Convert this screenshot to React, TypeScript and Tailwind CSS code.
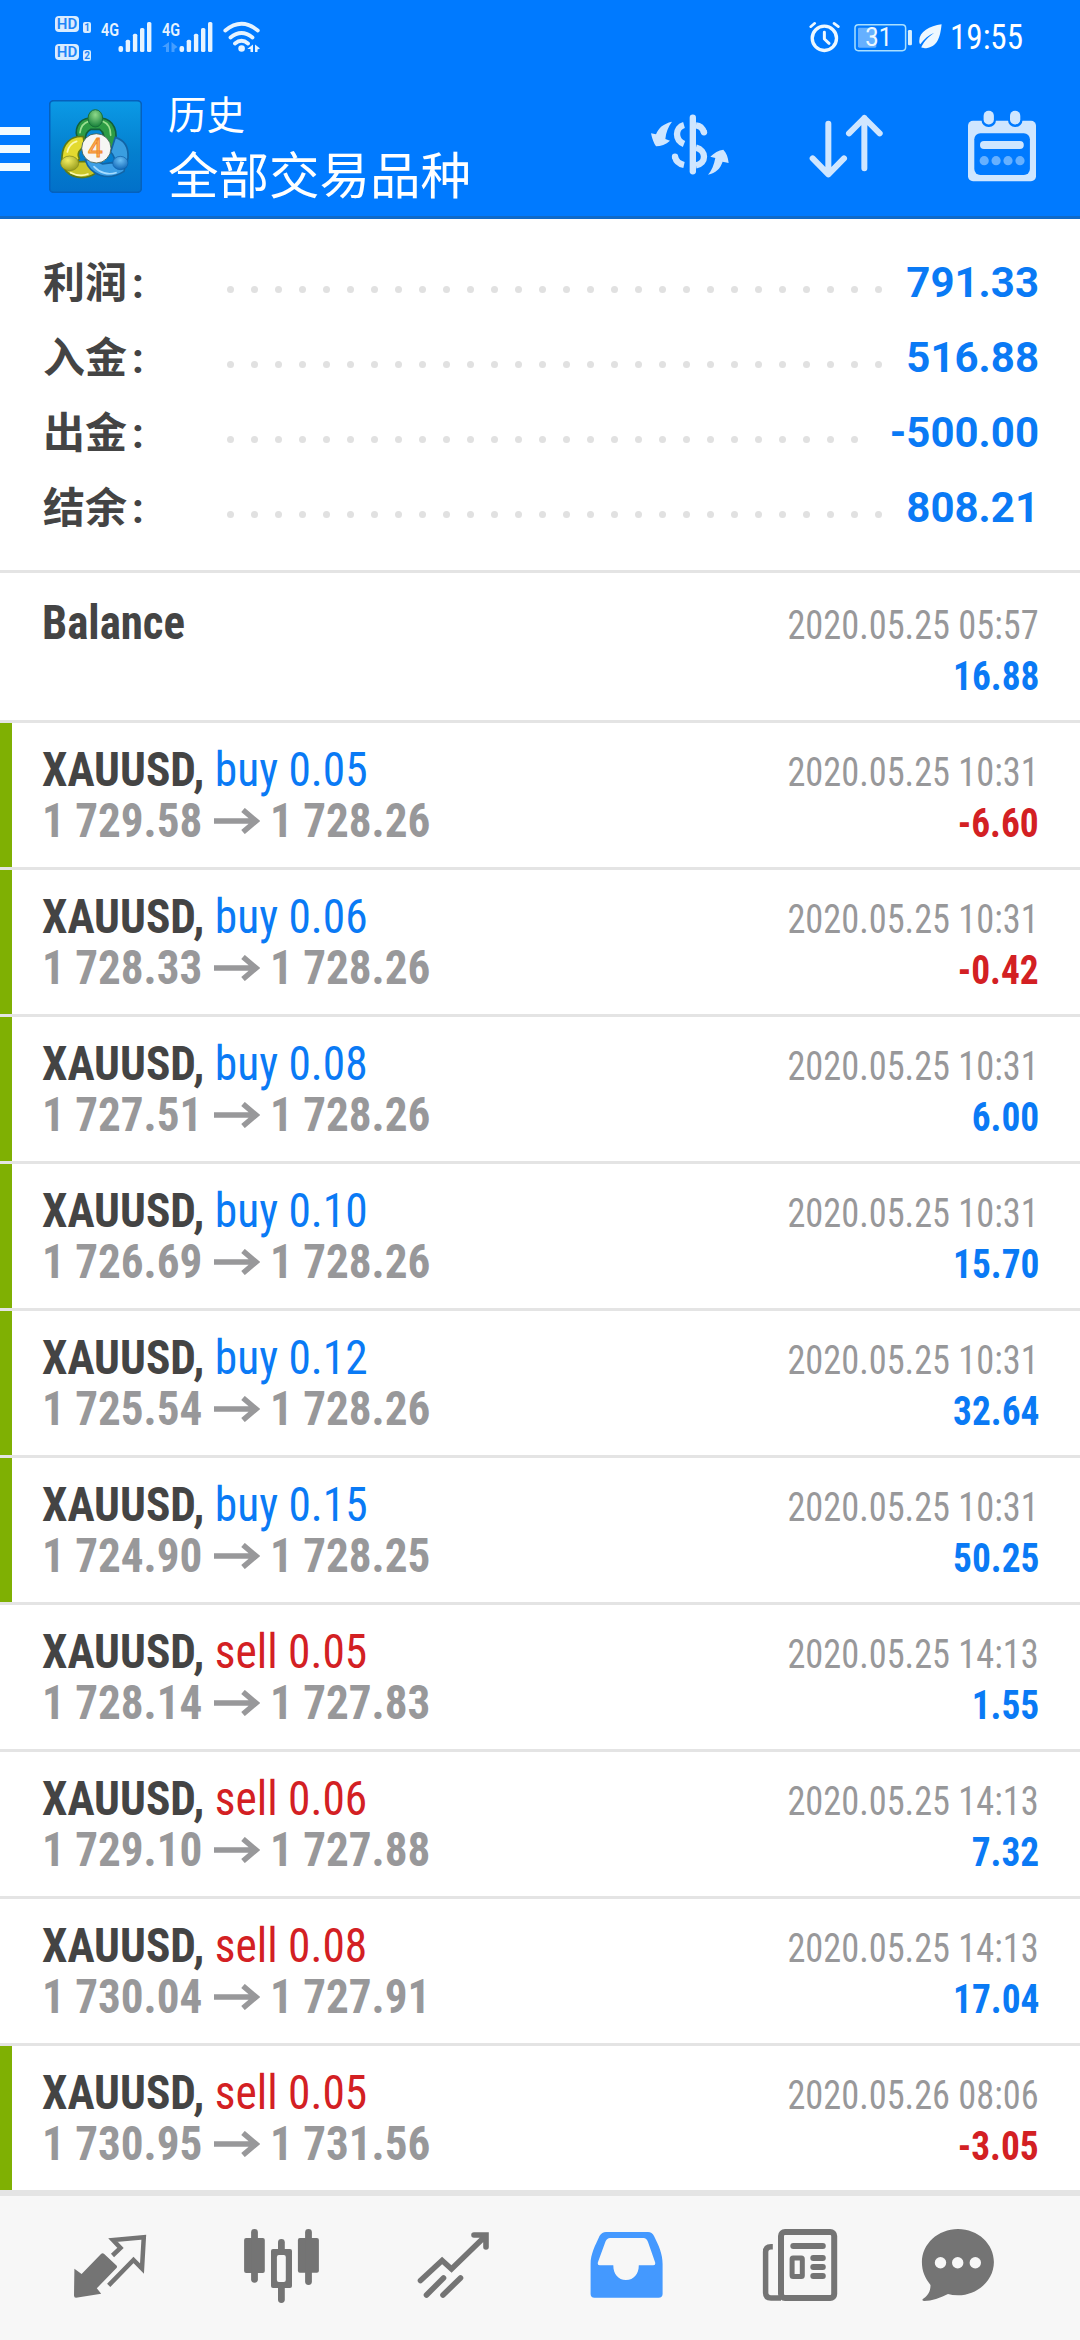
interface Deal {
  symbol: string;
  side?: "buy" | "sell";
  volume?: string;
  open?: string;
  close?: string;
  time: string;
  profit: string;
  marked?: boolean;
}

const summary = [
  { label: "利润", value: "791.33", dots: 28 },
  { label: "入金", value: "516.88", dots: 28 },
  { label: "出金", value: "-500.00", dots: 27 },
  { label: "结余", value: "808.21", dots: 28 },
];

const deals: Deal[] = [
  { symbol: "XAUUSD", side: "buy", volume: "0.05", open: "1 729.58", close: "1 728.26", time: "2020.05.25 10:31", profit: "-6.60", marked: true },
  { symbol: "XAUUSD", side: "buy", volume: "0.06", open: "1 728.33", close: "1 728.26", time: "2020.05.25 10:31", profit: "-0.42", marked: true },
  { symbol: "XAUUSD", side: "buy", volume: "0.08", open: "1 727.51", close: "1 728.26", time: "2020.05.25 10:31", profit: "6.00", marked: true },
  { symbol: "XAUUSD", side: "buy", volume: "0.10", open: "1 726.69", close: "1 728.26", time: "2020.05.25 10:31", profit: "15.70", marked: true },
  { symbol: "XAUUSD", side: "buy", volume: "0.12", open: "1 725.54", close: "1 728.26", time: "2020.05.25 10:31", profit: "32.64", marked: true },
  { symbol: "XAUUSD", side: "buy", volume: "0.15", open: "1 724.90", close: "1 728.25", time: "2020.05.25 10:31", profit: "50.25", marked: true },
  { symbol: "XAUUSD", side: "sell", volume: "0.05", open: "1 728.14", close: "1 727.83", time: "2020.05.25 14:13", profit: "1.55" },
  { symbol: "XAUUSD", side: "sell", volume: "0.06", open: "1 729.10", close: "1 727.88", time: "2020.05.25 14:13", profit: "7.32" },
  { symbol: "XAUUSD", side: "sell", volume: "0.08", open: "1 730.04", close: "1 727.91", time: "2020.05.25 14:13", profit: "17.04" },
  { symbol: "XAUUSD", side: "sell", volume: "0.05", open: "1 730.95", close: "1 731.56", time: "2020.05.26 08:06", profit: "-3.05", marked: true },
];

function HdBadge({ sim }: { sim: string }) {
  return (
    <div className="flex items-end gap-[4px]">
      <span className="flex h-[16px] w-[24px] items-center justify-center rounded-[4px] bg-[#d9ecff] text-[15px] leading-none font-semibold text-[#1f86f7]">
        HD
      </span>
      <span className="-mb-px flex h-[11px] w-[8px] items-center justify-center rounded-[2px] bg-[#d9ecff] text-[10px] leading-none font-bold text-[#1f86f7]">
        {sim}
      </span>
    </div>
  );
}

function Signal({ data }: { data?: boolean }) {
  return (
    <svg viewBox="101 20 52 34" className="h-[34px] w-[52px]" fill="#e6f3ff">
      <text x="101" y="35.6" fontSize="18.5" fontWeight="600" textLength="18" lengthAdjust="spacingAndGlyphs">
        4G
      </text>
      <rect x="118.5" y="46" width="4.6" height="6" rx="2" />
      <rect x="125.7" y="39.7" width="4.4" height="12.3" rx="1.6" />
      <rect x="132.9" y="33.7" width="4.4" height="18.3" rx="1.6" />
      <rect x="140" y="28" width="4.4" height="24" rx="1.6" />
      <rect x="147" y="22" width="4.4" height="30" rx="1.6" />
      {data && <path d="M108 42v10h-3v-5h-4zM110.500 42v10h3v-3l3-2z" opacity="0.3" />}
    </svg>
  );
}

function StatusBar() {
  return (
    <div className="flex h-[76px] items-start pr-[55px] pl-[55px] text-white">
      <div className="mt-[16px] flex flex-col gap-[12px]">
        <HdBadge sim="1" />
        <HdBadge sim="2" />
      </div>
      <div className="mt-[20px] ml-[10px] flex gap-[9px]">
        <Signal />
        <Signal data />
        <svg viewBox="221 20 38 34" className="h-[34px] w-[38px]" fill="none" stroke="#e6f3ff" strokeWidth="3.800" strokeLinecap="round">
          <path d="M223.300 30.500Q239.500 17 255.800 30.500M228.500 37.500Q239.500 28.500 250.500 37.500M233 43.500Q239.500 38 246 43.500" />
          <circle cx="239.600" cy="48.500" r="3.300" fill="#e6f3ff" stroke="none" />
          <path d="M251 44.500v7.500h-2.500v-3h-3.200zM253 44.500l5 4-2.500 1v2.500H253z" fill="#e6f3ff" stroke="none" />
        </svg>
      </div>
      <div className="ml-auto flex">
        <svg viewBox="26 30 400 100" className="mt-[20px] h-[33.3px] w-[133.3px]" fill="none" stroke="#eef8ff">
          <circle cx="72" cy="85" r="36.500" strokeWidth="10" />
          <path d="M72 67v20l14 13" strokeWidth="9" strokeLinecap="round" strokeLinejoin="round" />
          <path d="M31 50l12-10M101 40l13 10" strokeWidth="8" strokeLinecap="round" />
          <rect x="164" y="44" width="152" height="78" rx="10" stroke="#a9e0ff" strokeWidth="4.500" />
          <rect x="173" y="53" width="55" height="60" rx="4" fill="#66b0ff" stroke="none" />
          <rect x="323" y="60" width="12" height="46" rx="4" fill="#d9f0ff" stroke="none" />
          <text x="195" y="108" fontSize="76" fill="#eef8ff" stroke="none" textLength="80" lengthAdjust="spacingAndGlyphs">
            31
          </text>
          <path d="M424 43c-36 5-67 22-67 50 0 5 1 8 3 10 12-18 26-28 42-35-16 11-30 24-39 44 4 3 12 3 18 2 34-5 40-40 43-71z" fill="#eef8ff" stroke="none" />
        </svg>
        <span className="mt-[17px] ml-[8px] w-[75px] origin-left scale-x-[0.945] text-[35px] leading-[42px] whitespace-nowrap [font-family:'Roboto_Condensed',Roboto,sans-serif]">
          19:55
        </span>
      </div>
    </div>
  );
}

function Logo() {
  return (
    <svg viewBox="27 28 279 279" className="h-[93px] w-[93px]">
      <defs>
        <linearGradient id="tile" x1="0" y1="0" x2="0" y2="1">
          <stop offset="0" stopColor="#0b9ae6" />
          <stop offset="0.55" stopColor="#0480cf" />
          <stop offset="1" stopColor="#0270c9" />
        </linearGradient>
        <radialGradient id="green" cx="0.5" cy="0.3" r="0.7">
          <stop offset="0" stopColor="#8fd98a" />
          <stop offset="1" stopColor="#16803a" />
        </radialGradient>
        <radialGradient id="yellow" cx="0.4" cy="0.3" r="0.75">
          <stop offset="0" stopColor="#f3ee62" />
          <stop offset="1" stopColor="#94991a" />
        </radialGradient>
        <radialGradient id="blue" cx="0.5" cy="0.3" r="0.75">
          <stop offset="0" stopColor="#6cc0f5" />
          <stop offset="1" stopColor="#0b62b4" />
        </radialGradient>
      </defs>
      <rect x="29" y="30" width="275" height="275" rx="12" fill="url(#tile)" stroke="#0561bd" strokeWidth="5" />
      <path d="M116 148C100 122 112 84 150 82h34c38 4 54 44 37 80l-12 22-22-22c8-22 4-38-8-46h-26c-12 6-18 18-17 32z" fill="#2d9c45" stroke="#12603a" strokeWidth="5" />
      <path d="M120 126c2-18 12-30 26-34M188 92c16 6 24 22 24 42" fill="none" stroke="#9be08f" strokeWidth="5" strokeLinecap="round" />
      <path d="M130 138c-38-4-62 22-64 60v24l30 10 22-28c-8-14 0-30 16-36z" fill="#e3da2f" stroke="#5d7a17" strokeWidth="5" />
      <path d="M72 232c16 30 62 38 94 16l-28-36-32 2z" fill="#c9c62a" stroke="#5d7a17" strokeWidth="5" />
      <path d="M226 140c28 8 40 32 38 62l-6 26-34-8c2-18-2-26-12-36z" fill="#3a9ee0" stroke="#1264a5" strokeWidth="5" />
      <path d="M136 208c14 44 66 66 116 34l4-20-40-6-28 4-30-14z" fill="#3d9fe6" stroke="#1264a5" strokeWidth="5" />
      <path d="M162 228c16 18 42 26 66 18" fill="none" stroke="#a5dcff" strokeWidth="5" strokeLinecap="round" />
      <path d="M82 184c4-18 14-28 28-32M92 246c16 8 36 10 52 4" fill="none" stroke="#fbf9b0" strokeWidth="5" strokeLinecap="round" />
      <ellipse cx="166" cy="83" rx="22" ry="26" fill="url(#green)" stroke="#17703a" strokeWidth="3" />
      <ellipse cx="89" cy="218" rx="27" ry="22" fill="url(#yellow)" stroke="#7c8418" strokeWidth="2" />
      <ellipse cx="241" cy="217" rx="23" ry="20" fill="url(#blue)" stroke="#0d5fa9" strokeWidth="2" />
      <circle cx="169" cy="173" r="44" fill="#f6f6f4" stroke="#3b5a4a" strokeWidth="2.500" />
      <text x="166" y="200" fontSize="78" fontWeight="400" textAnchor="middle" fill="#ffb45e" stroke="#ee8a2d" strokeWidth="3">
        4
      </text>
    </svg>
  );
}

function Header() {
  return (
    <header className="h-[219px] border-b-[3px] border-[#0f6ac9] bg-[#007aff]">
      <StatusBar />
      <div className="flex h-[140px] items-start">
        <div className="mt-[51px] flex w-[30px] flex-col gap-[10px]">
          <div className="h-[8px] bg-[#f2fbff]" />
          <div className="h-[8px] bg-[#f2fbff]" />
          <div className="h-[8px] bg-[#f2fbff]" />
        </div>
        <div className="mt-[24px] ml-[19px]">
          <Logo />
        </div>
        <div className="mt-[13px] ml-[26px] text-white">
          <p className="text-[38.5px] leading-[54px]">历史</p>
          <p className="mt-px text-[50.5px] leading-[66px]">全部交易品种</p>
        </div>
        <svg viewBox="30 40 240 190" className="mt-[37.300px] ml-[179px] h-[63.300px] w-[80px]" fill="none" stroke="#cfe6ff" strokeWidth="19">
          <path d="M158.500 54V215" strokeLinecap="round" />
          <path d="M132 76C104 84 104 122 132 133M168 77C180 78 188 86 192 98M168 144C200 152 200 192 168 197M105 172C108 184 118 193 132 196" />
          <circle cx="192" cy="98" r="9.500" fill="#cfe6ff" stroke="none" />
          <circle cx="105" cy="171" r="9.500" fill="#cfe6ff" stroke="none" />
          <path
            d="M96 66C70 72 56 84 48 104L33 101C36 118 42 132 48 140C62 140 78 134 90 123L76 118C78 98 84 82 96 66ZM204 225C228 220 240 208 248 186L266 190C264 172 260 160 250 150C236 152 222 160 211 171L226 175C222 195 216 212 204 225Z"
            fill="#cfe6ff"
            stroke="none"
          />
        </svg>
        <svg viewBox="500 40 236 200" className="mt-[37.300px] ml-[76.700px] h-[66.700px] w-[78.700px]" fill="none" stroke="#cfe6ff" strokeWidth="18" strokeLinecap="round" strokeLinejoin="round">
          <path d="M564 72V224M517 176L564 224L611 176M672 206V55M626 101L672 55L718 101" />
        </svg>
        <svg viewBox="967 109 70 74" className="mt-[33px] ml-[81.600px] h-[74px] w-[70px]">
          <rect x="968" y="120.700" width="68" height="60.500" rx="5" fill="#cfe6ff" />
          <rect x="974.300" y="133.300" width="55.600" height="41.700" rx="6" fill="#007aff" />
          <rect x="981.500" y="108.500" width="14.500" height="18.500" rx="7" fill="#007aff" />
          <rect x="1008" y="108.500" width="14.500" height="18.500" rx="7" fill="#007aff" />
          <rect x="983.600" y="110.700" width="10.300" height="13.700" rx="5" fill="#cfe6ff" />
          <rect x="1010" y="110.700" width="10.300" height="13.700" rx="5" fill="#cfe6ff" />
          <rect x="980" y="141" width="43.800" height="8" rx="4" fill="#cfe6ff" />
          {[984.2, 996.1, 1008, 1020].map((x) => (
            <circle key={x} cx={x} cy="160.700" r="4.600" fill="#66b0ff" />
          ))}
        </svg>
      </div>
    </header>
  );
}

function Summary() {
  return (
    <section className="h-[354px] border-b-[3px] border-[#e4e4e4] pt-[26px] pr-[41px] pl-[43px] text-[42px] font-bold">
      {summary.map((row) => (
        <div key={row.label} className="flex h-[75px] items-center leading-[75px]">
          <span className="mt-[2px] w-[183.500px] text-[#444]">
            {row.label}
            <span className="ml-[5px]">:</span>
          </span>
          <span className="mt-[14px] flex gap-[17px]">
            {Array.from({ length: row.dots }, (_, i) => (
              <i key={i} className="h-[7px] w-[7px] rounded-full bg-[#e1e1e1]" />
            ))}
          </span>
          <span className="ml-auto text-[#0a7af5]">{row.value}</span>
        </div>
      ))}
    </section>
  );
}

function Result({ time, profit }: { time: string; profit: string }) {
  return (
    <div className="ml-auto flex flex-col items-end pt-[3px] text-[40px] leading-[51px] whitespace-nowrap">
      <span className="origin-right scale-x-[0.908] text-[#98989a]">{time}</span>
      <span
        className={
          profit.startsWith("-")
            ? "origin-right scale-x-[0.935] font-bold text-[#d32023]"
            : "origin-right scale-x-[0.935] font-bold text-[#0a7af5]"
        }
      >
        {profit}
      </span>
    </div>
  );
}

function DealRow({ deal }: { deal: Deal }) {
  return (
    <li className="flex h-[147px] border-b-[3px] border-[#e4e4e4]">
      <div className={deal.marked ? "w-[12px] bg-[#7fb003]" : "w-[12px]"} />
      <div className="flex flex-1 pt-[21px] pr-[41px] pl-[30px]">
        <div className="text-[48px] leading-[51px] font-bold whitespace-nowrap">
          <p className="origin-left scale-x-[0.945] text-[#444]">
            {deal.symbol},{" "}
            <span className={deal.side === "buy" ? "font-normal text-[#0a7af5]" : "font-normal text-[#d32023]"}>
              {deal.side} {deal.volume}
            </span>
          </p>
          <p className="flex text-[#98989a]">
            <span className="w-[172px] origin-left scale-x-[0.94]">{deal.open}</span>
            <svg viewBox="0 0 46 26" className="mt-[13px] h-[26px] w-[46px]" fill="none" stroke="#98989a" strokeWidth="5.500">
              <path d="M0 13H42M29 2L42 13L29 24" />
            </svg>
            <span className="ml-[10px] origin-left scale-x-[0.94]">{deal.close}</span>
          </p>
        </div>
        <Result time={deal.time} profit={deal.profit} />
      </div>
    </li>
  );
}

function NavBar() {
  return (
    <nav className="flex h-[147px] items-center gap-[92px] border-t-[3px] border-[#e4e4e4] bg-[#f7f7f7] pl-[70px]">
      <svg viewBox="-40 -40 80 80" className="h-[80px] w-[80px]" fill="#747474">
        <path d="M-35.600 .7L-28.400 6L-9 -14Q-7.400 -15.500 -5.800 -14L6.500 -2.500Q7.500 -1.300 6.500 0L-13.200 20.300L-8.800 25.700L-34 29.700Q-36 29.700 -36 27.500Z" />
        <path d="M2.500 -12.500L10.500 -20L3 -28L33.800 -30.800L32 .5L23.500 -8L-1.300 17.300" fill="none" stroke="#747474" strokeWidth="4.500" />
      </svg>
      <svg viewBox="-40 -40 80 80" className="h-[80px] w-[80px]" fill="#747474">
        <rect x="-37.900" y="-30" width="20.700" height="35" rx="2" />
        <rect x="-30.900" y="-39" width="6.800" height="53.700" rx="3.400" />
        <rect x="-11" y="-19" width="21" height="39" rx="2" />
        <rect x="-4" y="-29" width="6.800" height="64" rx="3.400" />
        <rect x="-5.100" y="-13" width="8.900" height="27" rx="2" fill="#f7f7f7" />
        <rect x="15.900" y="-30" width="21" height="34.700" rx="2" />
        <rect x="23.100" y="-39" width="6.800" height="56" rx="3.400" />
      </svg>
      <svg viewBox="-40 -40 80 80" className="h-[80px] w-[80px]" fill="none" stroke="#747474" strokeWidth="5.600" strokeLinecap="round">
        <path d="M-33.500 12.500L-11.900 -7.500L-2.500 1L31.500 -32M-10.500 10L-27.500 27M6.500 10L-11 27M20 -33H32V-21" />
      </svg>
      <svg viewBox="-40 -40 80 80" className="h-[80px] w-[80px]">
        <path
          fill="#4499ff"
          fillRule="evenodd"
          d="M-20 -36H22Q26 -36 28 -32C33 -22 36.600 -14 36.600 -4V26Q36.600 29.700 32.500 29.700H-31.500Q-35.400 29.700 -35.400 26V-4C-35.400 -14 -31 -22 -26.500 -32Q-24 -36 -20 -36ZM-16 -30Q-19 -30 -20.500 -26.500L-28 -6Q-29 -2.700 -26 -2.700H-12.700C-12.700 6 -8 12 0 12S12.800 6 12.800 -2.700H27Q30 -2.700 29 -6L22 -26Q20.500 -30 17.500 -30Z"
        />
      </svg>
      <svg viewBox="-40 -40 80 80" className="h-[80px] w-[80px]" fill="none" stroke="#747474">
        <path d="M-25.200 -21.300H-27Q-32.400 -21.300 -32.400 -16V24.500Q-32.400 30 -27 30H-17" strokeWidth="5.500" />
        <rect x="-17" y="-36" width="53.200" height="66" rx="4" strokeWidth="6" />
        <rect x="-7.700" y="-25" width="35.500" height="6" rx="3" fill="#747474" stroke="none" />
        <rect x="-5.900" y="-10" width="10.200" height="18.500" rx="1" strokeWidth="5" />
        <path d="M15.300 -10H24.800M15.300 -1H24.800M15.300 8H24.800" strokeWidth="6" strokeLinecap="round" />
      </svg>
      <svg viewBox="-40 -40 80 80" className="-ml-[12px] h-[80px] w-[80px]" fill="#747474">
        <path d="M0 -39C20 -39 35.900 -24 35.900 -6S20 27.300 0 27.300Q-6 27.300 -10 26C-18 30 -26 33 -34 33Q-37 32.500 -34.500 30.500C-29 27 -27.500 22 -27.500 17C-33 10 -36.100 3 -36.100 -6C-36.100 -24 -20 -39 0 -39Z" />
        <circle cx="-17.500" cy="-5.300" r="5.700" fill="#f7f7f7" />
        <circle cx="-.3" cy="-5.300" r="5.700" fill="#f7f7f7" />
        <circle cx="17.300" cy="-5.300" r="5.700" fill="#f7f7f7" />
      </svg>
    </nav>
  );
}

export default function App() {
  return (
    <div className="flex h-[2340px] w-[1080px] flex-col overflow-hidden bg-white [font-family:Roboto,'Noto_Sans_CJK_SC',sans-serif]">
      <Header />
      <Summary />
      <ul className="[font-family:'Roboto_Condensed',Roboto,sans-serif]">
        <li className="flex h-[150px] border-b-[3px] border-[#e4e4e4] pt-[24px] pr-[41px] pl-[42px]">
          <p className="origin-left scale-x-[0.935] text-[48px] leading-[51px] font-bold text-[#444]">Balance</p>
          <Result time="2020.05.25 05:57" profit="16.88" />
        </li>
        {deals.map((deal, i) => (
          <DealRow key={i} deal={deal} />
        ))}
      </ul>
      <NavBar />
    </div>
  );
}
